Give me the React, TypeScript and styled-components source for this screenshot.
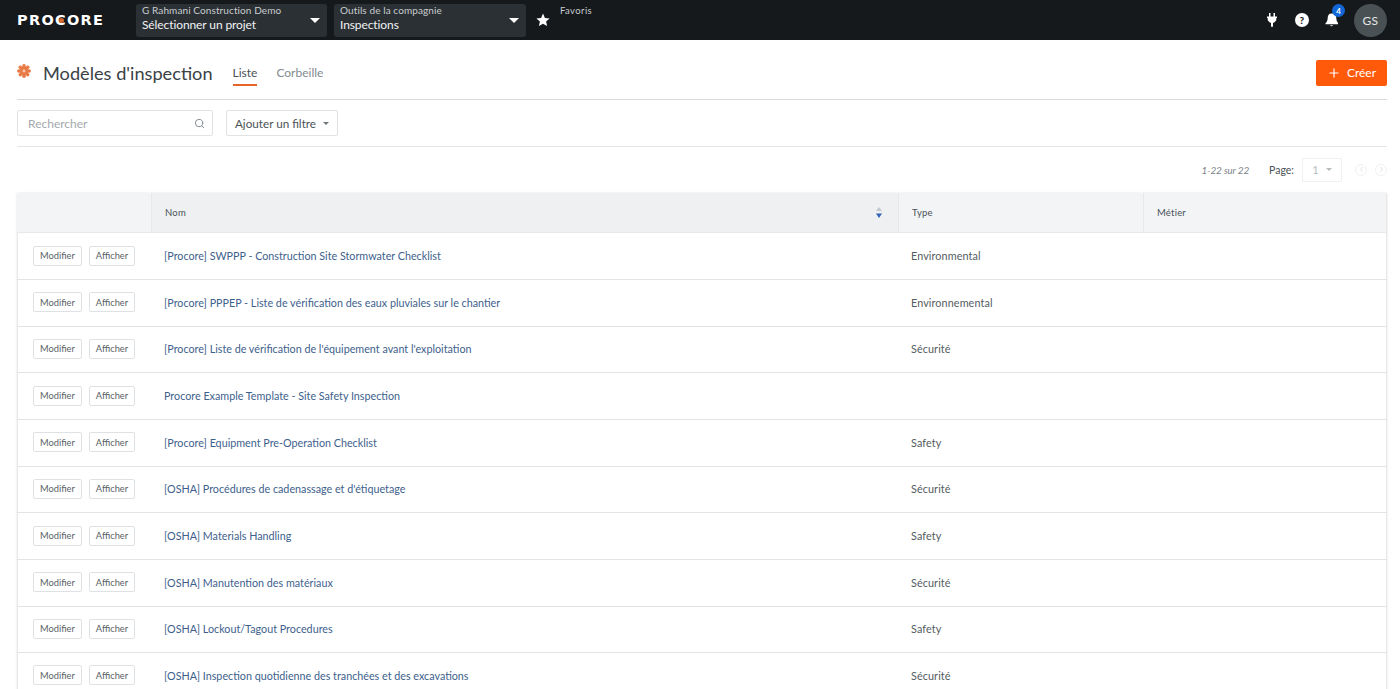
import React from "react";
import styled, { createGlobalStyle } from "styled-components";
import { Search, Plus, ChevronLeft, ChevronRight } from "lucide-react";

const Global = createGlobalStyle`
  html, body { margin: 0; padding: 0; height: 100%; overflow: hidden; background: #fff; }
  body { font-family: Lato, "Liberation Sans", sans-serif; color: #3a4145; }
  * { box-sizing: border-box; }
`;

const Page = styled.div`
  width: 1400px;
  height: 689px;
  overflow: hidden;
`;

const TopBar = styled.header`
  height: 40px;
  background: #15191c;
  display: flex;
  align-items: center;
  padding: 0 13px 0 17px;
`;

const Logo = styled.div`
  width: 119px;
  font-family: "DejaVu Sans", sans-serif;
  font-weight: 700;
  font-size: 14.5px;
  letter-spacing: 1.3px;
  color: #fff;
`;

const LogoMark = styled.span`
  position: relative;
  display: inline-block;
  &::after {
    content: "";
    position: absolute;
    left: 4px;
    top: 6px;
    width: 5px;
    height: 5px;
    border-radius: 50%;
    background: #d9692c;
  }
`;

const Selector = styled.div<{ $w: number }>`
  width: ${(p) => p.$w}px;
  height: 33px;
  margin-right: 7px;
  background: #2b3034;
  border-radius: 3px;
  padding: 0 7px 0 6px;
  display: flex;
  align-items: center;
  justify-content: space-between;
  color: #fff;
`;

const SelectorText = styled.div`
  display: flex;
  flex-direction: column;
  padding-bottom: 4px;
`;

const SelectorLabel = styled.span`
  font-size: 10px;
  line-height: 12px;
  color: #c9cdd0;
  letter-spacing: 0.1px;
`;

const SelectorValue = styled.span`
  font-size: 12px;
  line-height: 17px;
  letter-spacing: -0.1px;
  color: #f2f3f4;
`;

const Caret = styled.span<{ $size?: number; $color?: string }>`
  width: 0;
  height: 0;
  flex: none;
  border-left: ${(p) => p.$size ?? 5.5}px solid transparent;
  border-right: ${(p) => p.$size ?? 5.5}px solid transparent;
  border-top: ${(p) => Math.round((p.$size ?? 5.5) * 0.9)}px solid ${(p) => p.$color ?? "#fff"};
`;

const Favorites = styled.div`
  display: flex;
  align-items: flex-start;
  height: 40px;
  margin-left: 3px;
  gap: 10px;
`;

const FavStar = styled.svg`
  width: 14px;
  height: 14px;
  margin-top: 13px;
`;

const FavLabel = styled.span`
  font-size: 9.5px;
  color: #c9cdd0;
  margin-top: 5px;
  letter-spacing: 0.4px;
`;

const TopIcons = styled.div`
  margin-left: auto;
  display: flex;
  align-items: center;
`;

const IconSlot = styled.span`
  position: relative;
  width: 29.5px;
  height: 20px;
  display: flex;
  align-items: center;
  justify-content: center;
`;

const HelpDot = styled.span`
  width: 14px;
  height: 14px;
  border-radius: 50%;
  background: #fff;
  color: #15191c;
  font-size: 10px;
  font-weight: 900;
  display: flex;
  align-items: center;
  justify-content: center;
`;

const Badge = styled.span`
  position: absolute;
  top: -6px;
  right: 1px;
  width: 13px;
  height: 13px;
  border-radius: 50%;
  background: #1266d6;
  color: #fff;
  font-size: 8px;
  font-weight: 700;
  display: flex;
  align-items: center;
  justify-content: center;
`;

const Avatar = styled.div`
  width: 33px;
  height: 33px;
  margin-left: 8px;
  border-radius: 50%;
  background: #4a5154;
  color: #e4e6e7;
  font-size: 12px;
  letter-spacing: 0.4px;
  display: flex;
  align-items: center;
  justify-content: center;
`;

const TitleBar = styled.div`
  height: 60px;
  margin: 0 13px 0 17px;
  padding-top: 6px;
  border-bottom: 1px solid #d6dadc;
  display: flex;
  align-items: center;
`;

const Gear = styled.svg`
  width: 14px;
  height: 14px;
  margin: -3px 12px 0 0;
`;

const Title = styled.h1`
  margin: 0 20px 0 0;
  font-size: 18.2px;
  line-height: 24px;
  font-weight: 400;
  color: #3a4246;
`;

const Tab = styled.div<{ $active?: boolean }>`
  height: 26px;
  margin-right: 19px;
  padding-top: 5px;
  font-size: 12px;
  line-height: 15px;
  color: ${(p) => (p.$active ? "#4a5256" : "#838a8f")};
  border-bottom: 2px solid ${(p) => (p.$active ? "#e8642a" : "transparent")};
`;

const CreateButton = styled.button`
  margin: 0 0 0 auto;
  width: 71px;
  height: 26px;
  border: 0;
  border-radius: 2px;
  background: #ff5a0a;
  color: #fff;
  font: 400 12px Lato, sans-serif;
  display: flex;
  align-items: center;
  justify-content: center;
  gap: 6px;
  padding: 0;
`;

const FilterBar = styled.div`
  height: 47px;
  margin: 0 13px 0 17px;
  border-bottom: 1px solid #e3e6e8;
  display: flex;
  align-items: center;
  gap: 13px;
`;

const SearchBox = styled.div`
  width: 196px;
  height: 26px;
  border: 1px solid #e0e3e5;
  border-radius: 2px;
  padding: 0 7px 0 10px;
  display: flex;
  align-items: center;
  justify-content: space-between;
  font-size: 12px;
  color: #a3a9ad;
`;

const FilterButton = styled.div`
  width: 112px;
  height: 26px;
  border: 1px solid #e0e3e5;
  border-radius: 2px;
  display: flex;
  align-items: center;
  justify-content: center;
  gap: 7px;
  font-size: 11.7px;
  color: #4a5256;
`;

const PagerRow = styled.div`
  height: 46px;
  margin-right: 13px;
  padding-bottom: 1px;
  display: flex;
  align-items: center;
  justify-content: flex-end;
`;

const PageCount = styled.span`
  font-size: 10px;
  letter-spacing: -0.15px;
  font-style: italic;
  color: #7b8388;
  margin-right: 20px;
  em { font-size: 9.5px; }
`;

const PageLabel = styled.span`
  font-size: 10.5px;
  color: #4a5256;
  margin-right: 8px;
`;

const PageSelect = styled.div`
  width: 40px;
  height: 24px;
  border: 1px solid #f0f1f2;
  display: flex;
  align-items: center;
  justify-content: center;
  gap: 7px;
  font-size: 11px;
  color: #b6bbbe;
  margin-right: 13px;
`;

const PageArrow = styled.span`
  width: 12px;
  height: 12px;
  border: 1px solid #f0f1f2;
  border-radius: 50%;
  display: flex;
  align-items: center;
  justify-content: center;
  color: #d3d6d8;
  & + & { margin-left: 8px; }
`;

const Table = styled.div`
  margin: 0 13px 0 17px;
  border-left: 1px solid #e6e8ea;
  border-right: 1px solid #e6e8ea;
  box-shadow: 0 0 2px rgba(0, 0, 0, 0.12);
`;

const Columns = "134px 747px 245px 1fr";

const HeadRow = styled.div`
  display: grid;
  grid-template-columns: ${Columns};
  height: 40.4px;
  background: #f3f4f6;
  border-bottom: 1px solid #e6e8ea;
  margin-left: -1px;
`;

const HeadCell = styled.div<{ $sorted?: boolean }>`
  display: flex;
  align-items: center;
  justify-content: space-between;
  padding: 0 15px 0 13px;
  font-size: 9.5px;
  letter-spacing: 0.2px;
  color: #4a5256;
  border-left: 1px solid #e6e8ea;
  background: ${(p) => (p.$sorted ? "#eef0f2" : "transparent")};
  &:first-child { border-left: 0; }
`;

const Row = styled.div`
  display: grid;
  grid-template-columns: ${Columns};
  height: 46.65px;
  padding-bottom: 1px;
  align-items: center;
  border-bottom: 1px solid #e1e4e6;
  margin-left: -1px;
`;

const Actions = styled.div`
  display: flex;
  gap: 7px;
  padding-left: 16px;
`;

const ActionButton = styled.button`
  height: 20px;
  width: 49px;
  padding: 0;
  background: #fff;
  border: 1px solid #dfe2e4;
  border-radius: 2px;
  font: 400 9.3px Lato, sans-serif;
  color: #5a6266;
  &:last-child { width: 46px; }
`;

const NameLink = styled.a`
  padding-left: 13px;
  font-size: 10.75px;
  color: #3d618c;
`;

const TextCell = styled.div`
  padding-left: 13px;
  font-size: 10.8px;
  letter-spacing: 0.1px;
  color: #555c60;
`;

const rows = [
  ["[Procore] SWPPP - Construction Site Stormwater Checklist", "Environmental"],
  ["[Procore] PPPEP - Liste de vérification des eaux pluviales sur le chantier", "Environnemental"],
  ["[Procore] Liste de vérification de l'équipement avant l'exploitation", "Sécurité"],
  ["Procore Example Template - Site Safety Inspection", ""],
  ["[Procore] Equipment Pre-Operation Checklist", "Safety"],
  ["[OSHA] Procédures de cadenassage et d'étiquetage", "Sécurité"],
  ["[OSHA] Materials Handling", "Safety"],
  ["[OSHA] Manutention des matériaux", "Sécurité"],
  ["[OSHA] Lockout/Tagout Procedures", "Safety"],
  ["[OSHA] Inspection quotidienne des tranchées et des excavations", "Sécurité"],
];

export default function App() {
  return (
    <Page>
      <Global />
      <TopBar>
        <Logo>
          PRO<LogoMark>C</LogoMark>ORE
        </Logo>
        <Selector $w={191}>
          <SelectorText>
            <SelectorLabel>G Rahmani Construction Demo</SelectorLabel>
            <SelectorValue>Sélectionner un projet</SelectorValue>
          </SelectorText>
          <Caret />
        </Selector>
        <Selector $w={192}>
          <SelectorText>
            <SelectorLabel>Outils de la compagnie</SelectorLabel>
            <SelectorValue>Inspections</SelectorValue>
          </SelectorText>
          <Caret />
        </Selector>
        <Favorites>
          <FavStar viewBox="0 0 14 14">
            <path fill="#fff" d="M7 .6l1.900 4.300 4.700.5-3.500 3.100 1 4.600L7 10.700l-4.100 2.400 1-4.600L.4 5.400l4.700-.5z" />
          </FavStar>
          <FavLabel>Favoris</FavLabel>
        </Favorites>
        <TopIcons>
          <IconSlot>
            <svg width="10" height="14" viewBox="0 0 10 14">
              <path fill="#fff" d="M2 0h1.500v3.500H2zM6.500 0H8v3.500H6.500zM0 3.500h10V5H9.300v2.200L7 9.800H6v4H4v-4H3L.7 7.200V5H0z" />
            </svg>
          </IconSlot>
          <IconSlot>
            <HelpDot>?</HelpDot>
          </IconSlot>
          <IconSlot>
            <svg width="13" height="14" viewBox="0 0 13 14">
              <path d="M6.500 0.500c-2.600 0-3.800 2-3.800 4.400 0 2.800-1.200 4.300-2.200 5.300v1h13v-1c-1-1-2.200-2.500-2.200-5.300 0-2.400-1.200-4.400-3.800-4.400zM5 12.300a1.600 1.500 0 0 0 3 0z" fill="#fff" />
            </svg>
            <Badge>4</Badge>
          </IconSlot>
          <Avatar>GS</Avatar>
        </TopIcons>
      </TopBar>

      <TitleBar>
        <Gear viewBox="0 0 24 24">
          <g fill="#e87b45">
            <circle cx="12" cy="3" r="3" />
            <circle cx="12" cy="21" r="3" />
            <circle cx="3" cy="12" r="3" />
            <circle cx="21" cy="12" r="3" />
            <circle cx="5.600" cy="5.600" r="3" />
            <circle cx="18.400" cy="5.600" r="3" />
            <circle cx="5.600" cy="18.400" r="3" />
            <circle cx="18.400" cy="18.400" r="3" />
            <circle cx="12" cy="12" r="8" />
          </g>
          <circle cx="12" cy="12" r="2.500" fill="#f6c9b0" />
        </Gear>
        <Title>Modèles d'inspection</Title>
        <Tab $active>Liste</Tab>
        <Tab>Corbeille</Tab>
        <CreateButton>
          <Plus size={14} />
          Créer
        </CreateButton>
      </TitleBar>

      <FilterBar>
        <SearchBox>
          Rechercher
          <Search size={11} color="#7b8388" />
        </SearchBox>
        <FilterButton>
          Ajouter un filtre
          <Caret $size={3} $color="#6f777b" />
        </FilterButton>
      </FilterBar>

      <PagerRow>
        <PageCount>
          1-22 <em>sur</em> 22
        </PageCount>
        <PageLabel>Page:</PageLabel>
        <PageSelect>
          1
          <Caret $size={3.5} $color="#b6bbbe" />
        </PageSelect>
        <PageArrow>
          <ChevronLeft size={9} />
        </PageArrow>
        <PageArrow>
          <ChevronRight size={9} />
        </PageArrow>
      </PagerRow>

      <Table>
        <HeadRow>
          <HeadCell />
          <HeadCell $sorted>
            Nom
            <svg width="8" height="11" viewBox="0 0 8 11">
              <path d="M4 0l3 4H1z" fill="#c3c8cc" />
              <path d="M4 11L1 6.500h6z" fill="#2f62b8" />
            </svg>
          </HeadCell>
          <HeadCell>Type</HeadCell>
          <HeadCell>Métier</HeadCell>
        </HeadRow>
        {rows.map(([name, type]) => (
          <Row key={name}>
            <Actions>
              <ActionButton>Modifier</ActionButton>
              <ActionButton>Afficher</ActionButton>
            </Actions>
            <NameLink>{name}</NameLink>
            <TextCell>{type}</TextCell>
            <TextCell />
          </Row>
        ))}
      </Table>
    </Page>
  );
}
